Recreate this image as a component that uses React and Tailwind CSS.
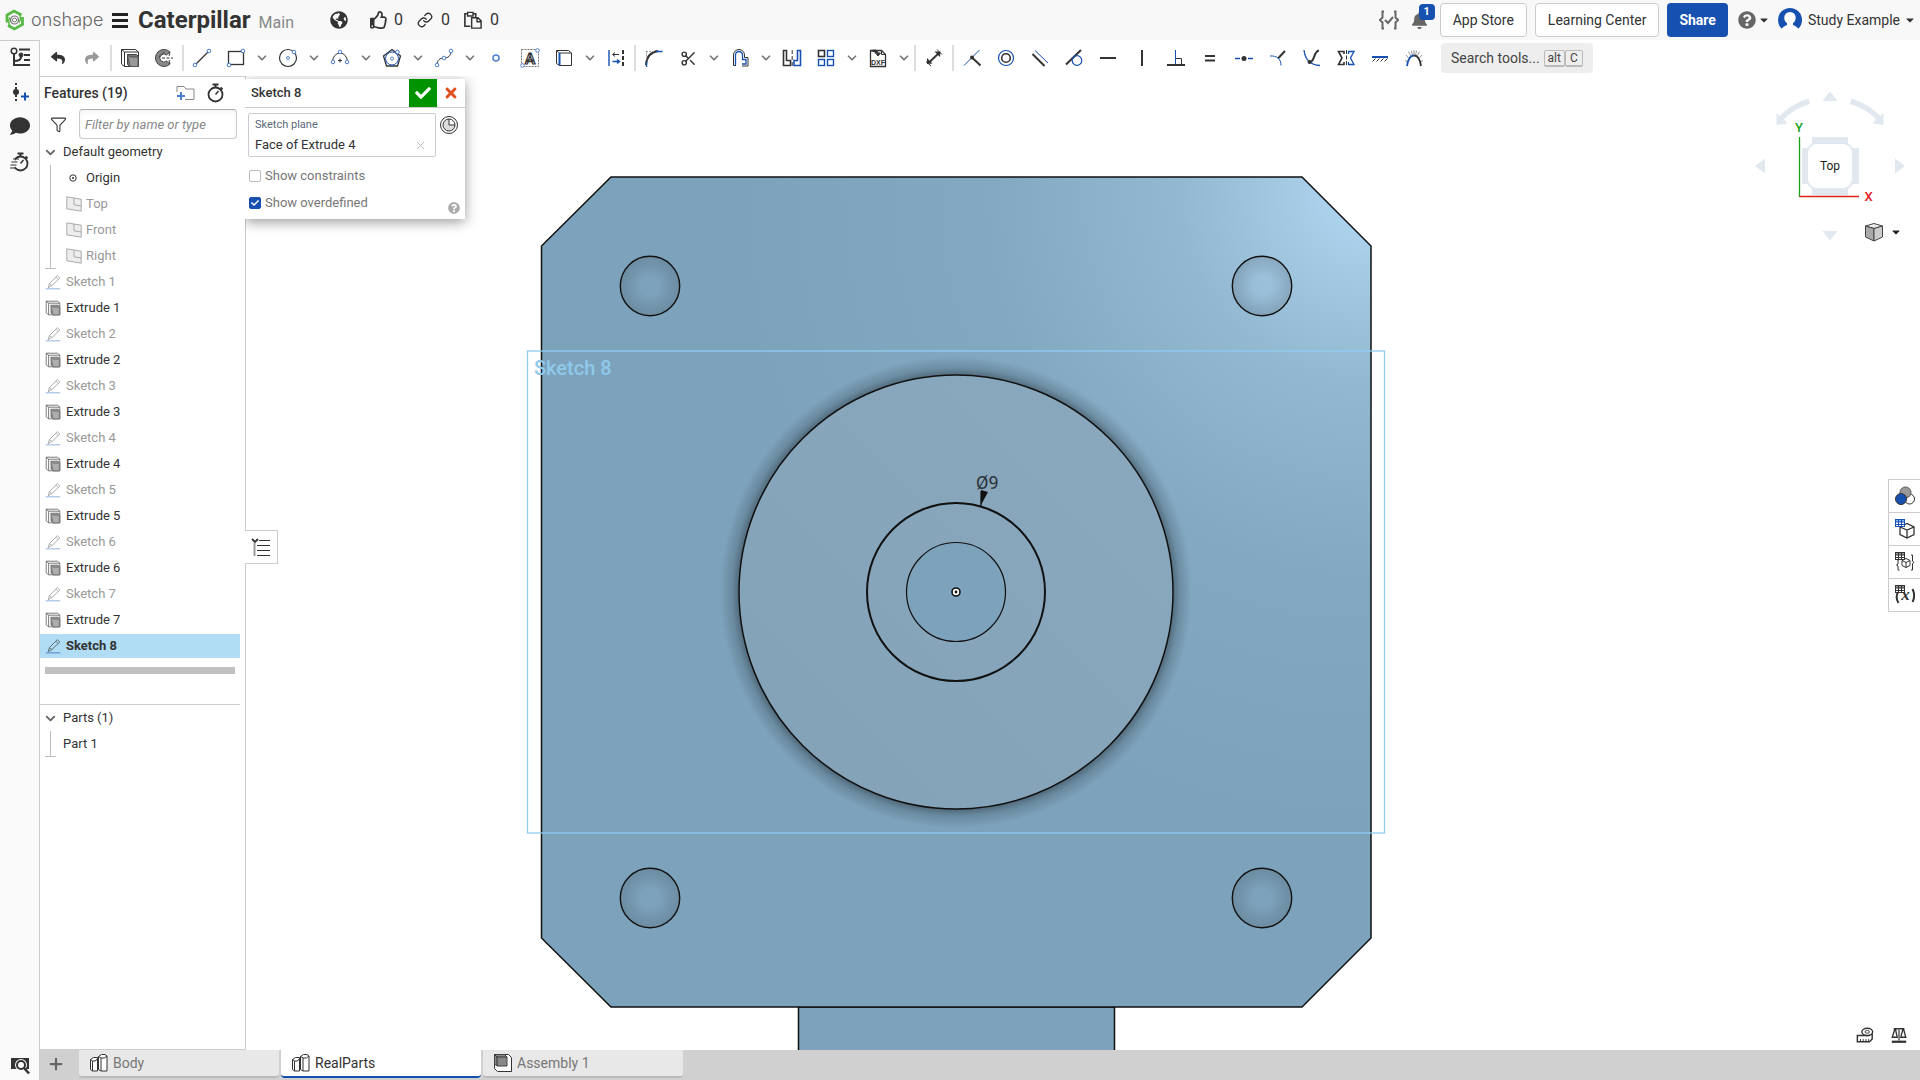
import React, { useState } from 'react';
import {
  FaBell,
  FaCaretDown,
  FaCheck,
  FaComment,
  FaGlobeAmericas,
  FaQuestionCircle,
  FaRegThumbsUp,
  FaReply,
  FaShare,
  FaTimes,
} from 'react-icons/fa';
import { ChevronDown, Filter, Link, Plus, Scissors } from 'lucide-react';

const INK = '#333333';
const BLUE = '#1651b0';
const SOFT_BLUE = '#4f80cc';

const Icon = ({ size = 20, children, className = '' }) => (
  <svg width={size} height={size} viewBox="0 0 20 20" fill="none" stroke={INK} strokeWidth="1" className={className}>
    {children}
  </svg>
);

const Dot = ({ x, y, r = 1.8 }) => <circle cx={x} cy={y} r={r} stroke={SOFT_BLUE} fill="#fff" />;

const ExtrudeIcon = ({ size = 20 }) => (
  <Icon size={size}>
    <path d="M1.5 1.5h14l3 2.5v14.5H4.5l-3-2.5z" fill="#fff" />
    <path d="M1.5 1.5l3 2.5h14M4.5 4v14.5" />
    <path d="M7.5 6.5h9l2 2v10h-8.5l-2.5-2z" fill="#777" stroke="#444" />
    <path d="M7.5 6.5l2.5 2.5h8v9.5h-8z" fill="#999" stroke="#555" />
  </Icon>
);

const PencilIcon = () => (
  <Icon size={16}>
    <path d="M4 17l1.500-5L15.500 2l3 3-10 9.500z" />
    <path d="M5.500 12l3 2.500M13.500 4l3 3" />
    <path d="M1 18.500h18" stroke={SOFT_BLUE} strokeWidth="1.500" />
  </Icon>
);

const PlaneIcon = () => (
  <Icon size={16}>
    <path d="M1 1l18 3v15L1 16z" fill="#ddd" />
    <path d="M10 2.500v8.500l9 1.500" />
  </Icon>
);

const StopwatchIcon = ({ size = 20, moving = false }) => (
  <Icon size={size}>
    <circle cx="10.500" cy="11.500" r="7" strokeWidth="1.800" />
    <path d="M7.500 1.500h6M10.500 1.500v3M15.500 4.500l2 2" strokeWidth="2" />
    <path d="M10.500 11.500l3-3.500" strokeWidth="1.500" />
    {moving && (
      <>
        <path d="M0 8h5M0 11h5M0 14h5" stroke="#fafafa" strokeWidth="3" />
        <path d="M3 7h6M1.500 10h6M.5 13h6M0 16h5" strokeWidth="1.200" />
      </>
    )}
  </Icon>
);

const PartStudioIcon = () => (
  <Icon>
    <path d="M1.500 6.500l3-2h4v13.500H3.500l-2-1.500zM1.500 6.500l2 1.500v10M3.500 8h3l2-2.500" fill="#fff" />
    <path d="M9.500 3.500l3-2h3.500l2 1.500v15h-6l-2.500-1.500zM9.500 3.500l2.500 1.500v13M12 5h3.500l2.500-2" fill="#fff" />
  </Icon>
);

const AssemblyIcon = () => (
  <Icon>
    <path d="M1.500 1.500h14l3 3v14h-14l-3-3z" fill="#fff" />
    <path d="M1.500 1.500h10l2.500 2.500v9H4l-2.500-2z" fill="#888" stroke="#444" />
    <path d="M1.500 1.500L4 4h10M4 4v9" />
  </Icon>
);

const GridIcon = ({ color = '#333', tint = '#999' }) => (
  <g stroke="none">
    <rect width="10" height="8" fill={color} />
    {[1, 4, 7].map((x) => (
      <g key={x}>
        <rect x={x} y="1" width="2" height="1.500" fill={tint} />
        <rect x={x} y="3.500" width="2" height="1.500" fill="#fff" />
        <rect x={x} y="6" width="2" height="1" fill="#fff" />
      </g>
    ))}
  </g>
);

const TOOLS = [
  { label: 'Undo', icon: <FaReply size={14} color={INK} /> },
  { label: 'Redo', icon: <FaShare size={14} color="#999" /> },
  'sep',
  { label: 'Extrude', icon: <ExtrudeIcon /> },
  {
    label: 'Revolve',
    icon: (
      <Icon>
        <path d="M16 4A8.500 8.500 0 1 0 16 16l-3.500-3a4 4 0 1 1 0-6z" fill="#888" stroke="#444" />
        <path d="M16 4l-1 4M16 16l-1-4M5 9.500c1-3 3-4 6-5" stroke="#444" />
        <path d="M8 10h11" strokeDasharray="3 1.500" />
      </Icon>
    ),
  },
  'sep',
  { label: 'Line', icon: <Icon><path d="M3 17L17 3" strokeWidth="1.300" /><Dot x={3} y={17} /><Dot x={17} y={3} /></Icon> },
  {
    label: 'Rectangle',
    menu: true,
    icon: <Icon><rect x="2.500" y="3.500" width="15" height="13" strokeWidth="1.300" /><Dot x={3} y={17} /><Dot x={17} y={3} /></Icon>,
  },
  { label: 'Circle', menu: true, icon: <Icon><circle cx="10" cy="10" r="8.500" strokeWidth="1.200" /><Dot x={10} y={10} r={1.5} /><Dot x={16} y={4} /></Icon> },
  {
    label: 'Arc',
    menu: true,
    icon: (
      <Icon>
        <path d="M2.500 14a7.500 9 0 0 1 15 0" />
        <path d="M8 12.500h4M10 10.500v4" />
        <Dot x={3} y={14} /><Dot x={17} y={14} /><Dot x={10} y={4} />
      </Icon>
    ),
  },
  {
    label: 'Polygon',
    menu: true,
    icon: (
      <Icon>
        <path d="M10 1.500L18.500 8l-3 10h-11l-3-10z" strokeWidth="1.300" />
        <circle cx="10" cy="10.500" r="6.500" stroke={BLUE} />
        <Dot x={10} y={10.5} r={1.5} /><Dot x={15.5} y={4} />
      </Icon>
    ),
  },
  {
    label: 'Spline',
    menu: true,
    icon: <Icon><path d="M3 17c0-5 3-7 7-7s7-2 7-7" /><Dot x={3} y={17} /><Dot x={10} y={10} /><Dot x={17} y={3} /></Icon>,
  },
  { label: 'Point', icon: <Icon><circle cx="10" cy="10" r="3" stroke={SOFT_BLUE} strokeWidth="1.500" /></Icon> },
  {
    label: 'Text',
    icon: (
      <Icon>
        <rect x="1.500" y="1.500" width="17" height="17" stroke="#777" strokeDasharray="2 1" />
        <text x="10" y="15.500" textAnchor="middle" fontSize="15" fontWeight="700" fontFamily="Roboto, sans-serif" fill="#fff" strokeWidth="1.200">A</text>
        <Dot x={2.5} y={17.5} /><Dot x={17.5} y={2.5} />
      </Icon>
    ),
  },
  {
    label: 'Use',
    menu: true,
    icon: <Icon><path d="M2.500 2.500h12l3 2.500v12.500H5.500l-3-2zM2.500 2.500L5.500 5h12M5.500 5v12.500" /><path d="M5.500 5v12.500" stroke={BLUE} strokeWidth="2" /></Icon>,
  },
  {
    label: 'Construction',
    icon: (
      <Icon>
        <path d="M3 2v16M6.500 13.500H13M11 11.500l2.500 2-2.500 2" stroke={BLUE} strokeWidth="1.400" />
        <path d="M7 6.500h6M9 4.500l-2.500 2 2.500 2" />
        <path d="M17 2v16" strokeWidth="2" strokeDasharray="4 2" />
      </Icon>
    ),
  },
  'sep',
  {
    label: 'Fillet',
    icon: (
      <Icon>
        <path d="M2 17c.5-8 5-13 12-14" strokeWidth="2" />
        <path d="M2.500 19v-5M12 3.500h6.500" stroke={BLUE} strokeWidth="1.400" />
        <path d="M2 3.500h8M2.500 3.500v8" stroke="#999" strokeDasharray="2 1" />
      </Icon>
    ),
  },
  { label: 'Trim', menu: true, icon: <Scissors size={17} color={INK} /> },
  {
    label: 'Offset',
    menu: true,
    icon: (
      <Icon>
        <path d="M5.500 17V7a3.500 3.500 0 0 1 7 0v4.500h3.500v4.500h-4" stroke={BLUE} strokeWidth="1.300" />
        <path d="M6 17.500H3.500V7a5.500 5.500 0 0 1 11 0v2.500h3.500v8.500h-6" />
      </Icon>
    ),
  },
  {
    label: 'Mirror',
    icon: (
      <Icon>
        <path d="M1.500 2.500h3v10h4v5h-7z" strokeWidth="1.600" />
        <path d="M18.500 2.500h-3v10h-3.500v5h6.500z" stroke={BLUE} strokeWidth="1.600" />
        <path d="M10.200 2v16" strokeDasharray="4 2" />
      </Icon>
    ),
  },
  {
    label: 'Pattern',
    menu: true,
    icon: (
      <Icon>
        <rect x="2.500" y="2.500" width="6" height="6" strokeWidth="1.600" />
        <g stroke={BLUE} strokeWidth="1.400">
          <rect x="11.500" y="2.500" width="6" height="6" />
          <rect x="2.500" y="11.500" width="6" height="6" />
          <rect x="11.500" y="11.500" width="6" height="6" />
        </g>
      </Icon>
    ),
  },
  {
    label: 'Insert DXF',
    menu: true,
    icon: (
      <Icon>
        <path d="M2.500 18.500v-16h11l4 4v12z" strokeWidth="1.300" />
        <path d="M13.500 2.500v4h4" />
        <path d="M3 3c4-2 7-1 7 3M7.500 5l2.500 3 2.500-3z" fill={INK} />
        <text x="10" y="16.500" textAnchor="middle" fontSize="7" fontWeight="700" fontFamily="Liberation Sans, sans-serif" fill={INK} stroke="none">DXF</text>
      </Icon>
    ),
  },
  'sep',
  {
    label: 'Dimension',
    icon: (
      <Icon>
        <path d="M5 14.500l9.500-9" strokeWidth="1.800" />
        <path d="M3 16v-6l5.500 5.500zM16.500 3.500h-6l5.500 5.500z" fill={INK} stroke="none" />
        <path d="M2 13.500l5 4.500M13 1.500l5 5" />
      </Icon>
    ),
  },
  'sep',
  {
    label: 'Coincident',
    icon: <Icon><path d="M2 17.500L17.500 2" stroke={BLUE} /><path d="M10 9.500l8.500 8" strokeWidth="2" /><circle cx="10" cy="9.500" r="2" fill={INK} stroke="none" /></Icon>,
  },
  { label: 'Concentric', icon: <Icon><circle cx="10" cy="10" r="7.500" stroke={BLUE} strokeWidth="1.200" /><circle cx="10" cy="10" r="4.300" strokeWidth="1.600" /></Icon> },
  { label: 'Parallel', icon: <Icon><path d="M2.500 6l12 12" strokeWidth="2" /><path d="M5 2.500L18 15" stroke={BLUE} /></Icon> },
  { label: 'Tangent', icon: <Icon><path d="M2 16.500L17 2" strokeWidth="2" /><circle cx="13" cy="12.500" r="4.800" stroke={BLUE} strokeWidth="1.200" /></Icon> },
  { label: 'Horizontal', icon: <Icon><path d="M2 10h16" strokeWidth="2" /></Icon> },
  { label: 'Vertical', icon: <Icon><path d="M10 2v16" strokeWidth="2" /></Icon> },
  {
    label: 'Perpendicular',
    icon: <Icon><path d="M1 17h18" strokeWidth="2" /><path d="M9.500 2v14" stroke={BLUE} /><path d="M9.500 10.500h6V17" /></Icon>,
  },
  { label: 'Equal', icon: <Icon><path d="M5 8h10M5 12.500h10" strokeWidth="2" /></Icon> },
  {
    label: 'Midpoint',
    icon: <Icon><circle cx="10" cy="10.500" r="2.500" fill={INK} stroke="none" /><path d="M1 10.500h5M14 10.500h5" stroke={BLUE} strokeWidth="1.400" /></Icon>,
  },
  {
    label: 'Normal',
    icon: <Icon><path d="M10 10.500L17 3" strokeWidth="2" /><path d="M2 8c7-.5 11 3 11 9.500" stroke={BLUE} /></Icon>,
  },
  {
    label: 'Pierce',
    icon: (
      <Icon>
        <path d="M2 2c1 9 5 15 16 15.500" stroke={BLUE} strokeWidth="1.300" />
        <path d="M7.500 14c5 1 4-11 9.500-11.500" strokeWidth="2" />
        <circle cx="7.500" cy="14" r="2" fill={INK} stroke="none" />
      </Icon>
    ),
  },
  {
    label: 'Symmetric',
    icon: (
      <Icon>
        <path d="M8 6V3.500H2.500L6 10l-3.500 6.500H8V14" strokeWidth="1.600" />
        <path d="M12.500 6V3.500H18L14.500 10l3.500 6.500h-5.500V14" stroke={BLUE} strokeWidth="1.300" />
        <path d="M10.500 2v16" strokeDasharray="4 1.500" />
      </Icon>
    ),
  },
  {
    label: 'Fix',
    icon: <Icon><path d="M2 9h16" stroke={BLUE} strokeWidth="2" /><path d="M5.500 10.500l-3 3M9.500 10.500l-3 3M13.500 10.500l-3 3M17.500 10.500l-3 3" /></Icon>,
  },
  {
    label: 'Curvature',
    icon: (
      <Icon>
        <path d="M10 7V2M7 8L4.500 3.500M13 8l2.500-4.500M5 10.500L2 7M15 10.500L18 7M4 14l-3-1.500M16 14l3-1.500M8.500 7.500l-1-5M11.500 7.500l1-5" stroke="#999" />
        <path d="M3 18C4 11 7 7.500 10 7.500" stroke={BLUE} strokeWidth="1.800" />
        <path d="M10 7.500c3 0 6 3.500 7 10.500" strokeWidth="1.800" />
      </Icon>
    ),
  },
];

const FEATURES = [1, 2, 3, 4, 5, 6, 7].flatMap((n) => [`Sketch ${n}`, `Extrude ${n}`]).concat('Sketch 8');

const TABS = [
  { name: 'Body', icon: <PartStudioIcon /> },
  { name: 'RealParts', icon: <PartStudioIcon /> },
  { name: 'Assembly 1', icon: <AssemblyIcon /> },
];

const Header = () => (
  <header className="flex h-10 shrink-0 items-center bg-[#f8f8f8] px-1 text-[#333]">
    <a href="#home" className="flex w-[104px] items-center gap-1.5" aria-label="onshape home">
      <svg width="21" height="22" viewBox="0 0 21 22" fill="none" stroke="#58b947" className="shrink-0">
        <path d="M3 13.500V6l7-4 7.500 4" strokeWidth="2.800" />
        <path d="M18.500 8v7.500l-8 4.500-6.500-3.500" strokeWidth="2.800" />
        <circle cx="10.500" cy="11" r="4" stroke="#777" strokeWidth="1.200" />
        <path d="M6.500 17c-2-2-2.500-5-.5-8.500M14.500 5c2 1.500 3 5 .5 8.500" strokeWidth="1.500" />
        <path d="M10.500 9l2 1v2l-2 1-2-1v-2z" stroke="#777" />
      </svg>
      <span className="font-['Inter',sans-serif] text-lg leading-5 font-light text-[#666]">onshape</span>
    </a>
    <button aria-label="Document menu" className="flex w-6 flex-col items-center gap-[3px]">
      <span className="h-[3px] w-4 bg-[#222]" />
      <span className="h-[3px] w-4 bg-[#222]" />
      <span className="h-[3px] w-4 bg-[#222]" />
    </button>
    <h1 className="ml-1.5 text-2xl leading-8 font-bold">Caterpillar</h1>
    <span className="mt-1.5 ml-2 text-base text-[#888]">Main</span>
    <div className="ml-9 flex items-center text-base">
      <FaGlobeAmericas size={18} className="mr-[22px]" />
      <button className="mr-3.5 flex items-center gap-1.5" aria-label="Likes"><FaRegThumbsUp size={18} />0</button>
      <button className="mr-3.5 flex items-center gap-2" aria-label="Linked documents"><Link size={16} />0</button>
      <button className="flex items-center gap-2" aria-label="Copies">
        <Icon size={18}>
          <path d="M7 17H1V3h3M10 3h3v4" strokeWidth="1.800" />
          <path d="M4 1.500h6v4H4z" strokeWidth="1.500" />
          <path d="M8.500 7.500h7l3.500 3.500v8H8.500zM14.500 7.500V12H19" strokeWidth="1.600" />
        </Icon>
        0
      </button>
    </div>
    <div className="ml-auto flex items-center text-sm">
      <button aria-label="Tasks" className="mr-3">
        <Icon className="text-[#666]">
          <path d="M5 1.500H3.500v6L1 10l2.500 2.500v6H5M15 1.500h1.500v6L19 10l-2.500 2.500v6H15" stroke="#666" strokeWidth="2" />
          <path d="M6 10l3 3 5-6" stroke="#666" strokeWidth="2" />
        </Icon>
      </button>
      <button aria-label="Notifications" className="relative mr-3 text-[#666]">
        <FaBell size={17} />
        <span className="absolute -top-2 left-2 h-4 w-4 rounded-sm bg-[#1651b0] text-center text-[11px] leading-4 font-bold text-white">1</span>
      </button>
      <button className="mr-2 h-[34px] rounded border border-[#ccc] bg-white px-3">App Store</button>
      <button className="mr-2 h-[34px] rounded border border-[#ccc] bg-white px-3">Learning Center</button>
      <button className="mr-2.5 h-[34px] rounded bg-[#1651b0] px-3 font-bold text-white">Share</button>
      <button aria-label="Help" className="mr-2 flex items-center gap-0.5">
        <FaQuestionCircle size={18} color="#666" />
        <FaCaretDown size={12} />
      </button>
      <button className="flex items-center gap-1">
        <svg width="24" height="24" viewBox="0 0 24 24" className="mr-0.5">
          <circle cx="12" cy="12" r="12" fill={BLUE} />
          <path d="M2 24c1-4 4-6 7-7v-2c-4-2-4-11 3-11s7 9 3 11v2c3 1 6 3 7 7z" fill="#fff" />
        </svg>
        Study Example
        <FaCaretDown size={12} />
      </button>
    </div>
  </header>
);

const SideBar = () => (
  <nav className="flex w-10 shrink-0 flex-col items-center border-t border-r border-[#ccc] bg-[#fafafa] pt-[6px] pb-[5px]">
    <button aria-label="Feature list" className="mb-[15px]">
      <Icon>
        <circle cx="4" cy="4" r="2.800" strokeWidth="1.500" />
        <circle cx="11" cy="8" r="2" fill={INK} />
        <path d="M4 7v11h5M4 14c5 0 7-1 7-4M9 2.500h11M14 8h6M14 13h6M9 18h11" strokeWidth="2" />
      </Icon>
    </button>
    <button aria-label="Insert" className="mb-[14px]">
      <Icon>
        <path d="M6 1v18" strokeWidth="2" strokeDasharray="2 2" />
        <circle cx="6" cy="10" r="3" fill={INK} stroke="none" />
        <path d="M15 10.500v8M11 14.500h8" stroke={BLUE} strokeWidth="2" />
      </Icon>
    </button>
    <button aria-label="Comments" className="mb-4"><FaComment size={20} color={INK} /></button>
    <button aria-label="Versions"><StopwatchIcon moving /></button>
    <button aria-label="Search parts" className="mt-auto">
      <Icon>
        <path d="M1 3h18v11H1z" fill={INK} stroke="none" />
        <circle cx="11" cy="10" r="6" fill="#fafafa" stroke="none" />
        <circle cx="11" cy="10" r="4" fill="#fafafa" strokeWidth="2" />
        <path d="M14 13l5 5.500" strokeWidth="2.500" />
      </Icon>
    </button>
  </nav>
);

const ToolBar = () => (
  <div className="flex h-9 shrink-0 items-center bg-white pl-px" role="toolbar">
    {TOOLS.map((tool, i) =>
      tool === 'sep' ? (
        <span key={i} className="mx-px h-[26px] w-0.5 shrink-0 bg-[#ddd]" />
      ) : (
        <div key={tool.label} className="flex shrink-0">
          <button aria-label={tool.label} className="flex h-[34px] w-[34px] items-center justify-center">{tool.icon}</button>
          {tool.menu && (
            <button aria-label={`${tool.label} options`} className="flex w-[18px] items-center justify-center">
              <ChevronDown size={14} strokeWidth={3} color="#777" />
            </button>
          )}
        </div>
      )
    )}
    <button className="ml-2.5 flex h-[30px] shrink-0 items-center rounded-sm bg-[#eee] px-2.5 text-sm text-[#444]">
      Search tools...
      <kbd className="ml-1 rounded-xs border border-b-2 border-[#bbb] px-[3px] font-[inherit] text-xs leading-[14px]">alt</kbd>
      <kbd className="rounded-xs border border-b-2 border-[#bbb] px-1 font-[inherit] text-xs leading-[14px]">C</kbd>
    </button>
  </div>
);

const TreeRow = ({ name, selected }) => {
  const isSketch = name.startsWith('Sketch');
  return (
    <li className="py-px">
      <div
        className={`flex h-6 items-center gap-[5px] pl-[5px] ${
          selected ? 'bg-[#b0ddf4] font-bold text-[#333]' : isSketch ? 'text-[#999]' : 'text-[#333]'
        }`}
      >
        <span className={isSketch && !selected ? 'opacity-50' : 'opacity-80'}>
          {isSketch ? <PencilIcon /> : <ExtrudeIcon size={16} />}
        </span>
        {name}
      </div>
    </li>
  );
};

const FeaturePanel = () => (
  <aside className="flex w-[206px] shrink-0 flex-col border-t border-r border-b border-[#ccc] bg-white pr-[5px] text-[13px] text-[#333]">
    <div className="flex h-8 items-center pl-1">
      <h2 className="text-sm font-medium">Features (19)</h2>
      <button aria-label="New folder" className="ml-auto">
        <Icon>
          <path d="M2 9V3.500h7l2 2.500h8v10.500h-9" stroke="#888" />
          <path d="M2 13h8M6 9v8" stroke={SOFT_BLUE} strokeWidth="2" />
        </Icon>
      </button>
      <button aria-label="Regeneration times" className="mr-[15px] ml-2.5"><StopwatchIcon /></button>
    </div>
    <div className="flex h-[30px] items-center">
      <Filter size={17} strokeWidth={1.5} className="mx-2.5 shrink-0" />
      <input
        aria-label="Filter features"
        placeholder="Filter by name or type"
        className="mr-[3px] ml-0.5 h-[30px] w-full min-w-0 rounded-sm border border-[#ccc] border-t-[#aaa] px-[5px] text-[13px] italic shadow-inner placeholder:text-[#888]"
      />
    </div>
    <button className="flex h-[26px] items-center gap-[5px] pl-[3px] text-left">
      <ChevronDown size={15} strokeWidth={3} color="#666" />
      Default geometry
    </button>
    <div className="flex">
      <span className="ml-[5px] flex w-[11px] justify-center border-b border-[#bbb]">
        <span className="w-px bg-[#bbb]" />
      </span>
      <ul className="pl-[3px]">
        <li className="flex h-[26px] items-center gap-1.5 pl-[7px]">
          <svg width="14" height="10" viewBox="-2 0 14 10" fill="none" stroke={INK}>
            <circle cx="5" cy="5" r="3.200" />
            <circle cx="5" cy="5" r="1" fill={INK} stroke="none" />
          </svg>
          Origin
        </li>
        {['Top', 'Front', 'Right'].map((plane) => (
          <li key={plane} className="flex h-[26px] items-center gap-1 pl-[7px] text-[#999]">
            <span className="opacity-50"><PlaneIcon /></span>
            {plane}
          </li>
        ))}
      </ul>
    </div>
    <ul>
      {FEATURES.map((name) => <TreeRow key={name} name={name} selected={name === 'Sketch 8'} />)}
    </ul>
    <div className="mx-[5px] mt-2 h-[7px] bg-[#c1c1c1]" />
    <div className="mt-[30px] border-t border-[#ccc]">
      <button className="flex h-[26px] items-center gap-[5px] pl-[3px] text-left">
        <ChevronDown size={15} strokeWidth={3} color="#666" />
        Parts (1)
      </button>
      <div className="flex">
        <span className="ml-[5px] flex w-[11px] justify-center border-b border-[#bbb]">
          <span className="w-px bg-[#bbb]" />
        </span>
        <span className="pl-[7px] leading-[26px]">Part 1</span>
      </div>
    </div>
  </aside>
);

const Check = ({ label, defaultChecked }) => (
  <label className="flex h-[27px] items-center gap-1 text-[#777]">
    <span className="grid h-3 w-3 place-items-center">
      <input
        type="checkbox"
        defaultChecked={defaultChecked}
        className="peer col-start-1 row-start-1 h-3 w-3 appearance-none rounded-xs border border-[#bbb] bg-white checked:border-[#1651b0] checked:bg-[#1651b0]"
      />
      <FaCheck size={8} className="pointer-events-none invisible col-start-1 row-start-1 text-white peer-checked:visible" />
    </span>
    {label}
  </label>
);

const SketchDialog = () => (
  <section className="absolute top-[3px] left-0 w-[220px] bg-white text-[13px] text-[#333] shadow-[0_3px_12px_rgba(0,0,0,0.4)]">
    <div className="flex h-[29px] items-center border-b border-[#ccc] pl-1.5">
      <h2 className="font-medium">Sketch 8</h2>
      <button aria-label="Accept" className="ml-auto flex h-7 w-7 items-center justify-center bg-[#009300] text-white"><FaCheck size={16} /></button>
      <button aria-label="Cancel" className="flex h-7 w-7 items-center justify-center text-[#e04e20]"><FaTimes size={16} /></button>
    </div>
    <div className="flex px-[3px] pt-[5px]">
      <div className="h-11 w-[188px] rounded-xs border border-[#ccc] px-1.5 pt-[3px]">
        <div className="text-[11px] leading-4 text-[#5a6a78]">Sketch plane</div>
        <div className="flex items-center justify-between leading-6">
          Face of Extrude 4
          <button aria-label="Clear plane" className="pr-1 text-[#bbb]">
            <svg width="9" height="9" viewBox="0 0 9 9" stroke="currentColor"><path d="M1 1l7 7M8 1L1 8" /></svg>
          </button>
        </div>
      </div>
      <button aria-label="Final state" className="mt-0.5 ml-[3px] self-start">
        <Icon>
          <circle cx="10" cy="10" r="8.500" />
          <path d="M10 4v6h6a6 6 0 1 1-6-6z" fill="#ddd" />
          <path d="M10 4a6 6 0 0 1 6 6" />
        </Icon>
      </button>
    </div>
    <div className="relative px-1 pt-[5px] pb-[3px]">
      <Check label="Show constraints" />
      <Check label="Show overdefined" defaultChecked />
      <button aria-label="Dialog help" className="absolute right-[5px] bottom-[5px] text-[#aaa]"><FaQuestionCircle size={12} /></button>
    </div>
  </section>
);

const Model = () => (
  <svg className="h-full w-full" viewBox="246 76 1674 974" preserveAspectRatio="xMidYMid meet" fill="none">
    <defs>
      <radialGradient id="plate" gradientUnits="userSpaceOnUse" cx="1371" cy="190" r="640" fx="1371" fy="190">
        <stop offset="0" stopColor="#b3daf5" />
        <stop offset="0.120" stopColor="#a5cbe5" />
        <stop offset="0.300" stopColor="#93b8d1" />
        <stop offset="0.600" stopColor="#83a9c2" />
        <stop offset="1" stopColor="#7da2bb" />
      </radialGradient>
      <linearGradient id="boss" x1="0" y1="1" x2="1" y2="0">
        <stop offset="0" stopColor="#83a2b8" />
        <stop offset="1" stopColor="#8aa9be" />
      </linearGradient>
      <radialGradient id="hole">
        <stop offset="0.300" stopColor="#000" stopOpacity="0" />
        <stop offset="1" stopColor="#000" stopOpacity="0.140" />
      </radialGradient>
      <radialGradient id="shade" gradientUnits="userSpaceOnUse" cx="956" cy="592" r="236">
        <stop offset="0.915" stopColor="#1c2830" stopOpacity="0.500" />
        <stop offset="0.950" stopColor="#1c2830" stopOpacity="0.200" />
        <stop offset="1" stopColor="#1c2830" stopOpacity="0" />
      </radialGradient>
    </defs>
    <path d="M798.500 1050V1007h316v43" fill="#7da2bb" stroke="#111" strokeWidth="1.500" />
    <path d="M611 177h691l69 69v692l-69 69H611l-69.500-69V246z" fill="url(#plate)" stroke="#111" strokeWidth="1.500" />
    {[[650, 286], [1262, 286], [650, 898], [1262, 898]].map(([x, y]) => (
      <circle key={`${x}-${y}`} cx={x} cy={y} r="29.700" fill="url(#hole)" stroke="#111" strokeWidth="1.400" />
    ))}
    <circle cx="956" cy="592" r="236" fill="url(#shade)" />
    <circle cx="956" cy="592" r="217" fill="url(#boss)" stroke="#111" strokeWidth="1.500" />
    <circle cx="956" cy="592" r="89" stroke="#111" strokeWidth="2" />
    <circle cx="956" cy="592" r="49.500" fill="#7da2bc" stroke="#111" strokeWidth="1.200" />
    <circle cx="956" cy="592" r="4" fill="#fff" stroke="#111" strokeWidth="1.600" />
    <circle cx="956" cy="592" r="1.400" fill="#111" />
    <path d="M981 490l7 2-7.500 14z" fill="#111" />
    <path d="M981 491v15" stroke="#111" />
    <text x="976" y="489" fontSize="18" fill="#2b3238" fontFamily="Roboto, sans-serif">Ø9</text>
    <rect x="527.500" y="351" width="857" height="482" stroke="#8fcdf0" strokeWidth="1.300" />
    <text x="534" y="375" fontSize="20" fontWeight="500" fill="#8fc9ec" fontFamily="Roboto, sans-serif">Sketch 8</text>
  </svg>
);

const ViewCube = () => (
  <div className="absolute top-3 right-3 text-[#222]">
    <svg width="156" height="157" viewBox="1752 88 156 157" fontFamily="Roboto, sans-serif">
      <g fill="#e1e8ef">
        <path d="M1830 91.500l7.500 9.500h-15zM1830 240.500l-7.500-9.500h15zM1755 166l10-7.500v15zM1905 166l-10-7.500v15z" />
        <path d="M1812 137h36v6l5 5h6v36h-6l-5 5v6h-36v-6l-5-5h-5v-36h5l5-5z" />
        <path d="M1776.500 113l3 3c8-8 18-14 29-17.500l1.500 5.500c-10 3-19 8-26 15.500l3.500 4-11 1.500zM1883.500 113l-3 3c-8-8-18-14-29-17.500l-1.500 5.500c10 3 19 8 26 15.500l-3.500 4 11 1.500z" />
      </g>
      <rect x="1808" y="144" width="44" height="44" rx="9" fill="#fff" />
      <path d="M1799.500 137v60" stroke="#17a317" strokeWidth="1.300" />
      <path d="M1799.500 196.500h59.500" stroke="#e0231f" strokeWidth="1.300" />
      <text x="1830" y="170" fontSize="12" textAnchor="middle" fill="#222">Top</text>
      <text x="1799" y="132" fontSize="13" fontWeight="500" textAnchor="middle" fill="#17a317">Y</text>
      <text x="1868.500" y="201" fontSize="13" fontWeight="500" textAnchor="middle" fill="#e0231f">X</text>
    </svg>
    <button aria-label="View options" className="absolute right-1.5 bottom-[3px] flex items-center gap-1.5">
      <svg width="20" height="20" viewBox="0 0 20 20" stroke="#444" strokeWidth="1">
        <path d="M1.500 4L10 1.500 18.500 4 10 6.500z" fill="#eee" />
        <path d="M1.500 4L10 6.500V19l-8.500-4z" fill="#aaa" />
        <path d="M18.500 4L10 6.500V19l8.500-4z" fill="#ccc" />
      </svg>
      <FaCaretDown size={12} />
    </button>
  </div>
);

const cube = 'M5 8l7-3.500L19 8v7.500l-7 3.500-7-3.500zM5 8l7 3 7-3M12 11v8';

const RightPanel = () => (
  <div className="absolute top-[403px] right-0 border-t border-l border-[#ccc] bg-white">
    {[
      {
        label: 'Appearance',
        icon: (
          <Icon>
            <circle cx="14.500" cy="13" r="5" fill="#fff" />
            <circle cx="10.500" cy="6.500" r="5.500" fill="#999" stroke="#555" />
            <circle cx="6" cy="13" r="5.500" fill={BLUE} />
          </Icon>
        ),
      },
      { label: 'Configurations', icon: <Icon><path d={cube} strokeWidth="1.300" /><GridIcon color={BLUE} tint="#7fb8f0" /></Icon> },
      {
        label: 'Custom tables',
        icon: <Icon><path d="M7 8.500l4-2 4 2v5l-4 2-4-2zM7 8.500l4 2 4-2M11 10.500v5" /><path d="M4 8H3v4l-1.500 1L3 14v4h1.500M16 3h1.500v6l1.500 1.500-1.500 1V18H16" /><GridIcon /></Icon>,
      },
      {
        label: 'Variables',
        icon: (
          <Icon>
            <text x="10.500" y="15" textAnchor="middle" fontSize="17" fontStyle="italic" fontWeight="700" fontFamily="Liberation Serif, serif" fill={INK} stroke="none">x</text>
            <path d="M3 7c-2 4-1.500 8 .5 11M17.500 4c2 4 2 9 0 13" strokeWidth="2" />
            <GridIcon />
          </Icon>
        ),
      },
    ].map((item) => (
      <button key={item.label} aria-label={item.label} className="flex h-[33px] w-[31px] items-center justify-center border-b border-[#ccc]">
        {item.icon}
      </button>
    ))}
  </div>
);

const Canvas = () => (
  <main className="relative -ml-px min-w-0 flex-1 overflow-hidden">
    <div className="h-full pl-px"><Model /></div>
    <SketchDialog />
    <button aria-label="Toggle feature list" className="absolute top-[454px] left-0 flex h-[34px] w-[33px] items-center justify-center border border-l-0 border-[#ccc] bg-white">
      <Icon>
        <path d="M1 2l3 3 3-3" strokeWidth="1.800" />
        <path d="M3.500 6v13" stroke="#999" strokeWidth="2" />
        <path d="M8 3.500h11M6 8.500h13M6 13.500h13M6 18.500h13" strokeWidth="1.200" />
      </Icon>
    </button>
    <ViewCube />
    <RightPanel />
    <div className="absolute right-3 bottom-1.5 flex gap-4">
      <button aria-label="Measure">
        <Icon size={18}>
          <path d="M1.500 10.500h13l3.500-3v7l-3 3H1.500z" strokeWidth="1.600" />
          <ellipse cx="12.500" cy="6.500" rx="6" ry="4" fill="#fff" strokeWidth="1.500" />
          <ellipse cx="12.500" cy="6.500" rx="2.500" ry="1.500" />
          <path d="M5 17v-2.500M8 17v-2.500M11 17v-2.500M14 17v-2.500" />
        </Icon>
      </button>
      <button aria-label="Mass properties">
        <Icon size={18}>
          <path d="M4 3h12M5.500 3L2.500 12.500h5.500L6 3M14.500 3l-2.500 9.500h5.500L15 3" strokeWidth="1.500" />
          <path d="M10 3v13" stroke="#777" strokeWidth="2" />
          <path d="M2 17.500h16" strokeWidth="2.500" />
        </Icon>
      </button>
    </div>
  </main>
);

const BottomTabs = () => {
  const [active, setActive] = useState('RealParts');

  return (
    <div className="flex h-[30px] shrink-0 items-start bg-[#d0d0d0]" role="tablist">
      <button aria-label="Add tab" className="flex h-7 w-[38px] items-center justify-center pr-1.5"><Plus size={18} strokeWidth={3} color="#666" /></button>
      {TABS.map((tab) => (
        <button
          key={tab.name}
          role="tab"
          aria-selected={active === tab.name}
          onClick={() => setActive(tab.name)}
          className={`mx-px flex h-7 w-[200px] items-center gap-1 rounded-b-sm border-b-2 pl-2.5 text-sm ${
            active === tab.name ? 'border-[#1651b0] bg-white text-[#333]' : 'border-[#bbb] bg-[#e8e8e8] text-[#777]'
          }`}
        >
          {tab.icon}
          {tab.name}
        </button>
      ))}
    </div>
  );
};

const App = () => (
  <div className="flex h-screen flex-col overflow-hidden bg-white font-['Roboto',sans-serif] text-[#333]">
    <Header />
    <div className="flex min-h-0 flex-1">
      <SideBar />
      <div className="flex min-w-0 flex-1 flex-col">
        <ToolBar />
        <div className="flex min-h-0 flex-1">
          <FeaturePanel />
          <Canvas />
        </div>
        <BottomTabs />
      </div>
    </div>
  </div>
);

export default App;
